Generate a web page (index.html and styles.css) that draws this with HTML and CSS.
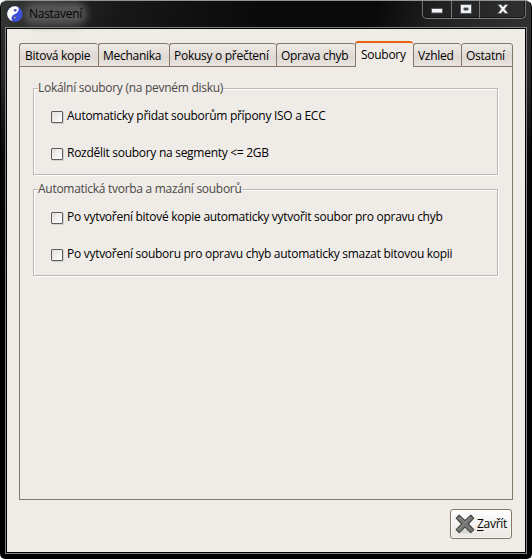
FILE: index.html
```html
<!DOCTYPE html>
<html lang="cs">
<head>
<meta charset="utf-8">
<title>Nastavení</title>
<link rel="stylesheet" href="styles.css">
</head>
<body>
<div class="window">
  <header class="titlebar">
    <svg class="app-icon" width="16" height="16" viewBox="0 0 16 16">
      <circle cx="8" cy="8" r="7.7" fill="#3c50e0"/>
      <path d="M11 .9A7.7 7.7 0 1 0 5.6 15.3C3.6 12.6 4.2 9.5 7.6 8.2S12.7 4 11 .9Z" fill="#fff"/>
      <circle cx="8.2" cy="4.3" r="1.4" fill="#4856ae"/>
      <circle cx="7.8" cy="11.6" r="1.4" fill="#a4aaa8" stroke="#263078" stroke-width=".6"/>
    </svg>
    <h1 class="title"><span>Nastavení</span></h1>
    <div class="controls">
      <span class="control"><svg width="12" height="6" viewBox="0 0 12 6"><rect x=".5" y=".5" width="11" height="4.5" rx=".5" fill="#f4f4f4" stroke="#555a66"/></svg></span>
      <span class="control"><svg width="12" height="10" viewBox="0 0 12 10"><path d="M.5.5h11v9H.5ZM4 4v2h4V4Z" fill="#f0f0f0" fill-rule="evenodd" stroke="#555a66"/></svg></span>
      <span class="control close"><svg width="12" height="10" viewBox="0 0 12 10"><path d="M.7.5H4L6 2.7 8 .5h3.3L7.8 5l3.5 4.5H8L6 7.3 4 9.5H.7L4.2 5Z" fill="#f4f4f4" stroke="#555a66" stroke-width=".8"/></svg></span>
    </div>
  </header>
  <main class="content">
    <nav class="tabs">
      <span class="tab t1">Bitová kopie</span>
      <span class="tab t2">Mechanika</span>
      <span class="tab t3">Pokusy o přečtení</span>
      <span class="tab t4">Oprava chyb</span>
      <span class="tab selected">Soubory</span>
      <span class="tab t6">Vzhled</span>
      <span class="tab t7">Ostatní</span>
    </nav>
    <section class="panel">
      <div class="group">
        <h2 class="legend">Lokální soubory (na pevném disku)</h2>
        <label class="option"><i class="box"></i><span>Automaticky přidat souborům přípony ISO a ECC</span></label>
        <label class="option"><i class="box"></i><span>Rozdělit soubory na segmenty &lt;= 2GB</span></label>
      </div>
      <div class="group">
        <h2 class="legend">Automatická tvorba a mazání souborů</h2>
        <label class="option"><i class="box"></i><span>Po vytvoření bitové kopie automaticky vytvořit soubor pro opravu chyb</span></label>
        <label class="option"><i class="box"></i><span>Po vytvoření souboru pro opravu chyb automaticky smazat bitovou kopii</span></label>
      </div>
    </section>
    <footer class="actions">
      <button class="button">
        <svg width="20" height="20" viewBox="0 0 20 20">
          <ellipse cx="10" cy="17.5" rx="8" ry="2" fill="#d8d6d4"/>
          <path d="M4.2 1.2 10 6.8l5.8-5.6 3 3L13.2 10l5.6 5.6-3 3L10 13.1l-5.8 5.5-3-3L6.8 10 1.2 4.2Z" fill="#777977" stroke="#454745" stroke-width="1.2" stroke-linejoin="round"/>
          <path d="M4.2 2.8 10 8.3l5.8-5.5M2.8 15.5 8.3 10" fill="none" stroke="#989a98" stroke-width=".8"/>
        </svg>
        <span><u>Z</u>avřít</span>
      </button>
    </footer>
  </main>
</div>
</body>
</html>
```

FILE: styles.css
```css
* { box-sizing: border-box; }
body {
  margin: 0;
  background: #fff;
  font: 12px/16px "Open Sans", "Noto Sans", sans-serif;
  letter-spacing: -0.28px;
  color: #000;
}
.window {
  width: 532px;
  height: 559px;
  padding: 0 5px 5px;
  border: 1px solid #000;
  border-top-color: #8c9694;
  border-radius: 7px 7px 5px 5px;
  background: linear-gradient(#303130, #252625 80px, #080808 150px, #000 300px);
  overflow: hidden;
}
.titlebar {
  display: flex;
  height: 27px;
  margin: 0 -5px;
  padding: 0 5px 0 6px;
  background: linear-gradient(105deg, #343634, #171817 22%, #090909 50%, #090909 70%, #202120 82%, #303130);
}
.app-icon { margin-top: 5px; flex: none; }
.title {
  margin: 3px 0 0 6px;
  height: 20px;
  font-size: 12px;
  line-height: 20px;
  font-weight: 400;
  color: #050505;
  flex: 1;
}
.title span {
  display: inline-block;
  border-radius: 10px;
  background: #555;
  box-shadow: 0 0 7px 5px #555;
  height: 13px;
  line-height: 14px;
}
.controls {
  display: flex;
  width: 104px;
  height: 19px;
  margin-top: -1px;
  border: 1px solid #777978;
  border-top: 0;
  border-radius: 0 0 5px 5px;
  box-shadow: inset 0 0 0 1px #151515;
}
.control {
  width: 28px;
  display: flex;
  justify-content: center;
  align-items: center;
  border-right: 1px solid #777978;
}
.control:first-child { padding-top: 4px; width: 29px; }
.control.close { flex: 1; border: 0; }
.content {
  height: 525px;
  display: flex;
  flex-direction: column;
  border: 1px solid #000;
  outline: 1px solid #818281;
  background: #efebe7;
  padding: 12px 12px 0;
}
.tabs {
  display: flex;
  align-items: flex-end;
  width: 494px;
  height: 26px;
  flex: none;
}
.tab {
  height: 24px;
  padding: 4px 0 0 5px;
  border: 1px solid #857868;
  border-right: 0;
  border-radius: 3px 3px 0 0;
  background: linear-gradient(#efebe7, #dfd8d3 60%, #e9e4df);
  white-space: nowrap;
  flex: none;
}
.t1 { width: 79px; }
.t2 { width: 71px; padding-left: 4px; }
.t3 { width: 107px; padding-left: 4px; }
.t4 { width: 79px; padding-left: 4px; }
.t6 { width: 48px; padding-left: 4px; }
.t7 { width: 52px; padding-left: 4px; border-right: 1px solid #857868; }
.selected {
  width: 58px;
  height: 26px;
  padding-top: 4px;
  border-top: 2px solid #e66412;
  border-bottom: 0;
  background: #efebe7;
}
.panel {
  width: 494px;
  height: 433px;
  flex: none;
  border: 1px solid #857868;
  border-top: 0;
  padding: 21px 14px 0 13px;
}
.group {
  height: 87px;
  margin-bottom: 14px;
  border: 1px solid #bcb9b5;
  box-shadow: 1px 1px 0 #fff, inset 1px 1px 0 #fff;
}
.legend {
  width: fit-content;
  height: 16px;
  margin: -9px 0 0 4px;
  background: #efebe7;
  font-size: 12px;
  font-weight: 400;
  line-height: 16px;
  color: #4b4945;
  white-space: nowrap;
}
.option {
  display: flex;
  height: 16px;
  margin: 12px 0 21px 17px;
  white-space: nowrap;
}
.box {
  width: 12px;
  height: 12px;
  margin: 3px 4px 0 0;
  flex: none;
  border: 1px solid #5d5d5d;
  border-radius: 1px;
  background: linear-gradient(135deg, #e1dfdd, #fff);
  box-shadow: 1px 1px 0 #d3d0cc;
}
.actions {
  display: flex;
  justify-content: flex-end;
  padding: 9px 1px 0 0;
}
.button {
  width: 62px;
  height: 30px;
  padding: 0 0 0 4px;
  display: flex;
  align-items: center;
  gap: 2px;
  border: 1px solid #857868;
  border-radius: 3px;
  background: linear-gradient(#fff, #f4f2f0 50%, #ebe7e3);
  box-shadow: inset 0 0 0 1px #fff8;
  font: inherit;
  letter-spacing: inherit;
  color: #000;
}
.button svg { flex: none; }
.button u { text-underline-offset: 2px; }
```
